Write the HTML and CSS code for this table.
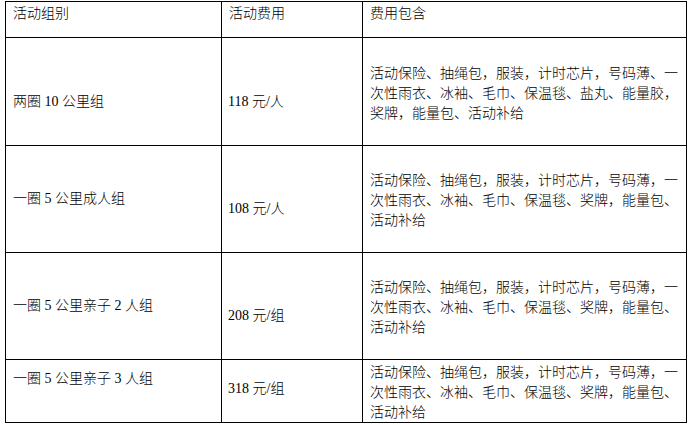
FILE: index.html
```html
<!DOCTYPE html>
<html lang="zh-CN">
<head>
<meta charset="utf-8">
<title>活动费用</title>
<link rel="stylesheet" href="styles.css">
</head>
<body>
<div class="fee-table" role="table">
  <div class="cell head" role="columnheader">活动组别</div>
  <div class="cell head" role="columnheader">活动费用</div>
  <div class="cell head cjk" role="columnheader">费用包含</div>

  <div class="cell name r1" role="cell">两圈 10 公里组</div>
  <div class="cell price r1" role="cell">118 元/人</div>
  <div class="cell items" role="cell">活动保险、抽绳包，服装，计时芯片，号码薄、一次性雨衣、冰袖、毛巾、保温毯、盐丸、能量胶，奖牌，能量包、活动补给</div>

  <div class="cell name r2" role="cell">一圈 5 公里成人组</div>
  <div class="cell price r2" role="cell">108 元/人</div>
  <div class="cell items" role="cell">活动保险、抽绳包，服装，计时芯片，号码薄，一次性雨衣、冰袖、毛巾、保温毯、奖牌，能量包、活动补给</div>

  <div class="cell name r3" role="cell">一圈 5 公里亲子 2 人组</div>
  <div class="cell price r3" role="cell">208 元/组</div>
  <div class="cell items" role="cell">活动保险、抽绳包，服装，计时芯片，号码薄，一次性雨衣、冰袖、毛巾、保温毯、奖牌，能量包、活动补给</div>

  <div class="cell name r4" role="cell">一圈 5 公里亲子 3 人组</div>
  <div class="cell price r4" role="cell">318 元/组</div>
  <div class="cell items" role="cell">活动保险、抽绳包，服装，计时芯片，号码薄，一次性雨衣、冰袖、毛巾、保温毯、奖牌，能量包、活动补给</div>
</div>
</body>
</html>
```
FILE: styles.css
```css
html, body {
  margin: 0;
  padding: 0;
  background: #ffffff;
}

body {
  padding: 1px 0 0 5px;
  font-family: "Liberation Serif", "Noto Sans CJK SC", serif;
  font-size: 14px;
  line-height: 20px;
  font-weight: 300;
  color: #000000;
}

.fee-table {
  display: grid;
  width: 682px;
  box-sizing: border-box;
  grid-template-columns: 215px 140px 323px;
  grid-template-rows: 35px 107px 106px 106px 62px;
  gap: 1px;
  padding: 1px;
  background: #000000;
}

.cell {
  background: #ffffff;
  padding: 0 6px 0 7px;
  white-space: nowrap;
}

.head {
  padding-top: 0;
  font-family: "Noto Sans CJK SC", sans-serif;
}

.price {
  padding-left: 6px;
}

.items {
  display: flex;
  flex-direction: column;
  justify-content: center;
  white-space: normal;
  font-family: "Noto Sans CJK SC", sans-serif;
  padding-left: 7px;
  padding-right: 6px;
}

.name.r1 { padding-top: 54px; }
.price.r1 { padding-top: 54px; }
.name.r2 { padding-top: 43px; }
.price.r2 { padding-top: 53px; }
.name.r3 { padding-top: 43px; }
.price.r3 { padding-top: 53px; }
.name.r4 { padding-top: 9px; }
.price.r4 { padding-top: 19px; }
```
